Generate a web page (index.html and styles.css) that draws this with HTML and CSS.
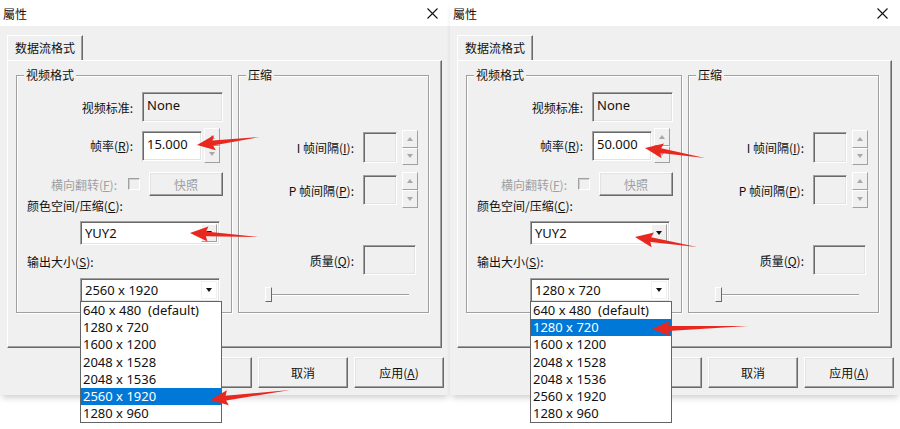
FILE: index.html
```html
<!DOCTYPE html>
<html lang="zh-CN">
<head>
    <meta charset="UTF-8">
    <meta name="viewport" content="width=device-width, initial-scale=1.0">
    <title>屬性</title>
    <link rel="stylesheet" href="styles.css">
</head>
<body>
<div class="screens">
    <div class="dialog">
        <div class="titlebar">
            <span class="title">屬性</span>
            <svg class="close" width="11" height="11" viewBox="0 0 11 11"><path d="M0.5 0.5 L10.5 10.5 M10.5 0.5 L0.5 10.5" stroke="#111" stroke-width="1.1" fill="none"/></svg>
        </div>
        <div class="body">
            <div class="tabs"><div class="tab">数据流格式</div></div>
            <div class="panel">
                <fieldset class="group video">
                    <legend>视频格式</legend>
                    <div class="row row-std">
                        <span class="lbl">视频标准:</span>
                        <div class="field readonly w-std">None</div>
                    </div>
                    <div class="row row-rate">
                        <span class="lbl">帧率(<u>R</u>):</span>
                        <div class="field w-rate">15.000</div>
                        <div class="spin"><span class="spin-btn"><i class="up"></i></span><span class="spin-btn"><i class="down"></i></span></div>
                    </div>
                    <div class="row row-flip">
                        <span class="lbl lbl-flip disabled">横向翻转(<u>F</u>):</span>
                        <span class="check"></span>
                        <span class="btn btn-snap disabled">快照</span>
                    </div>
                    <div class="caption cap-color">颜色空间/压缩(<u>C</u>):</div>
                    <div class="combo combo-color">
                        <span class="value">YUY2</span>
                        <span class="drop"><i class="down dark"></i></span>
                    </div>
                    <div class="caption cap-size">输出大小(<u>S</u>):</div>
                    <div class="combo combo-size">
                        <span class="value">2560 x 1920</span>
                        <span class="drop open"><i class="down dark"></i></span>
                        <ul class="list">
                            <li>640 x 480  (default)</li>
                            <li>1280 x 720</li>
                            <li>1600 x 1200</li>
                            <li>2048 x 1528</li>
                            <li>2048 x 1536</li>
                            <li class="selected">2560 x 1920</li>
                            <li>1280 x 960</li>
                        </ul>
                    </div>
                </fieldset>
                <fieldset class="group compress">
                    <legend>压缩</legend>
                    <div class="row row-i">
                        <span class="lbl">I 帧间隔(<u>I</u>):</span>
                        <div class="field readonly w-small"></div>
                        <div class="spin"><span class="spin-btn"><i class="up"></i></span><span class="spin-btn"><i class="down"></i></span></div>
                    </div>
                    <div class="row row-p">
                        <span class="lbl">P 帧间隔(<u>P</u>):</span>
                        <div class="field readonly w-small"></div>
                        <div class="spin"><span class="spin-btn"><i class="up"></i></span><span class="spin-btn"><i class="down"></i></span></div>
                    </div>
                    <div class="row row-q">
                        <span class="lbl lbl-q">质量(<u>Q</u>):</span>
                        <div class="field readonly w-quality"></div>
                    </div>
                    <div class="slider">
                        <span class="thumb"></span>
                        <span class="track"></span>
                    </div>
                </fieldset>
            </div>
            <div class="buttons">
                <span class="btn">确定</span>
                <span class="btn">取消</span>
                <span class="btn">应用(<u>A</u>)</span>
            </div>
        </div>
    </div>

    <div class="dialog">
        <div class="titlebar">
            <span class="title">屬性</span>
            <svg class="close" width="11" height="11" viewBox="0 0 11 11"><path d="M0.5 0.5 L10.5 10.5 M10.5 0.5 L0.5 10.5" stroke="#111" stroke-width="1.1" fill="none"/></svg>
        </div>
        <div class="body">
            <div class="tabs"><div class="tab">数据流格式</div></div>
            <div class="panel">
                <fieldset class="group video">
                    <legend>视频格式</legend>
                    <div class="row row-std">
                        <span class="lbl">视频标准:</span>
                        <div class="field readonly w-std">None</div>
                    </div>
                    <div class="row row-rate">
                        <span class="lbl">帧率(<u>R</u>):</span>
                        <div class="field w-rate">50.000</div>
                        <div class="spin"><span class="spin-btn"><i class="up"></i></span><span class="spin-btn"><i class="down"></i></span></div>
                    </div>
                    <div class="row row-flip">
                        <span class="lbl lbl-flip disabled">横向翻转(<u>F</u>):</span>
                        <span class="check"></span>
                        <span class="btn btn-snap disabled">快照</span>
                    </div>
                    <div class="caption cap-color">颜色空间/压缩(<u>C</u>):</div>
                    <div class="combo combo-color">
                        <span class="value">YUY2</span>
                        <span class="drop"><i class="down dark"></i></span>
                    </div>
                    <div class="caption cap-size">输出大小(<u>S</u>):</div>
                    <div class="combo combo-size">
                        <span class="value">1280 x 720</span>
                        <span class="drop open"><i class="down dark"></i></span>
                        <ul class="list">
                            <li>640 x 480  (default)</li>
                            <li class="selected">1280 x 720</li>
                            <li>1600 x 1200</li>
                            <li>2048 x 1528</li>
                            <li>2048 x 1536</li>
                            <li>2560 x 1920</li>
                            <li>1280 x 960</li>
                        </ul>
                    </div>
                </fieldset>
                <fieldset class="group compress">
                    <legend>压缩</legend>
                    <div class="row row-i">
                        <span class="lbl">I 帧间隔(<u>I</u>):</span>
                        <div class="field readonly w-small"></div>
                        <div class="spin"><span class="spin-btn"><i class="up"></i></span><span class="spin-btn"><i class="down"></i></span></div>
                    </div>
                    <div class="row row-p">
                        <span class="lbl">P 帧间隔(<u>P</u>):</span>
                        <div class="field readonly w-small"></div>
                        <div class="spin"><span class="spin-btn"><i class="up"></i></span><span class="spin-btn"><i class="down"></i></span></div>
                    </div>
                    <div class="row row-q">
                        <span class="lbl lbl-q">质量(<u>Q</u>):</span>
                        <div class="field readonly w-quality"></div>
                    </div>
                    <div class="slider">
                        <span class="thumb"></span>
                        <span class="track"></span>
                    </div>
                </fieldset>
            </div>
            <div class="buttons">
                <span class="btn">确定</span>
                <span class="btn">取消</span>
                <span class="btn">应用(<u>A</u>)</span>
            </div>
        </div>
    </div>

    <!-- red annotation arrows -->
    <svg class="marks" width="900" height="429" viewBox="0 0 900 429">
        <g fill="#e8271f">
            <polygon transform="translate(197 145) rotate(-7.2)" points="0,0 18,-7.5 16,-2.4 63.5,0 16,2.4 18,7.5"/>
            <polygon transform="translate(190 233) rotate(3.4)" points="0,0 18,-7.5 16,-2.4 68,0 16,2.4 18,7.5"/>
            <polygon transform="translate(210 400) rotate(-7.1)" points="0,0 18,-7.5 16,-2.4 80.6,0 16,2.4 18,7.5"/>
            <polygon transform="translate(645 148) rotate(9.5)" points="0,0 18,-7.5 16,-2.4 60.8,0 16,2.4 18,7.5"/>
            <polygon transform="translate(635 237) rotate(9.2)" points="0,0 18,-7.5 16,-2.4 62.8,0 16,2.4 18,7.5"/>
            <polygon transform="translate(652 329) rotate(-1.8)" points="0,0 18,-7.5 16,-2.4 96,0 16,2.4 18,7.5"/>
        </g>
    </svg>
</div>
</body>
</html>
```

FILE: styles.css
```css
* {
    box-sizing: border-box;
}
body {
    margin: 0;
    background-color: #fff;
    font-family: "Noto Sans CJK SC", "Noto Sans", sans-serif;
    font-size: 12px;
    color: #111;
}
.screens {
    position: relative;
    display: flex;
    width: 900px;
    height: 429px;
    overflow: hidden;
}
.dialog {
    width: 450px;
    height: 395px;
    background-color: #f0f0f0;
    box-shadow: 0 5px 6px -2px rgba(0, 0, 0, 0.18);
    display: flex;
    flex-direction: column;
}
.titlebar {
    height: 26px;
    background-color: #fff;
    display: flex;
    align-items: center;
    justify-content: space-between;
    padding: 0 12px 0 3px;
}
.title {
    font-size: 12px;
}
.body {
    flex: 1;
    padding: 9px 6px 0 7px;
}
.tabs {
    display: flex;
    height: 25px;
}
.tab {
    width: 76px;
    height: 25px;
    border-top: 1px solid #fff;
    border-left: 1px solid #fff;
    border-right: 1px solid #696969;
    box-shadow: inset -1px 0 0 #a0a0a0;
    text-align: center;
    line-height: 23px;
}

/* tab page */
.panel {
    height: 288px;
    margin-right: 2px;
    border: 1px solid;
    border-color: #fff #696969 #696969 #fff;
    box-shadow: inset -1px -1px 0 #a0a0a0;
    padding: 6px 0 0 8px;
    display: flex;
    gap: 6px;
    align-items: flex-start;
}
.group {
    margin: 0;
    padding: 0;
    min-width: 0;
    height: 246px;
    border: 1px solid #a0a0a0;
    box-shadow: inset 1px 1px 0 #fff, 1px 1px 0 #fff;
    display: flex;
    flex-direction: column;
}
.group legend {
    margin-left: 7px;
    padding: 0 2px;
    line-height: 16px;
    background-color: #f0f0f0;
}
.video {
    width: 216px;
}
.compress {
    width: 191px;
}
.row {
    display: flex;
    align-items: center;
}
.lbl {
    width: 116px;
    text-align: right;
    flex-shrink: 0;
}
.disabled {
    color: #a0a0a0;
}
.row-std {
    margin-top: 9px;
    height: 30px;
}
.row-rate {
    margin-top: 6px;
    height: 35px;
}
.row-flip {
    margin-top: 9px;
    height: 24px;
}
.lbl-flip {
    width: 100px;
}
.caption {
    height: 16px;
    line-height: 16px;
    padding-left: 10px;
}
.cap-color {
    margin-top: 2px;
}
.cap-size {
    margin-top: 9px;
}
.combo-color {
    margin-top: 7px;
}
.combo-size {
    margin-top: 8px;
}

/* sunken edit boxes */
.field {
    height: 30px;
    margin-left: 9px;
    border: 1px solid;
    border-color: #a0a0a0 #fff #fff #a0a0a0;
    box-shadow: inset 1px 1px 0 #696969, inset -1px -1px 0 #e3e3e3;
    background-color: #fff;
    font-family: "Noto Sans", sans-serif;
    font-size: 13px;
    line-height: 18px;
    padding: 3px 3px 0 4px;
}
.readonly {
    background-color: #f0f0f0;
}
.w-std {
    width: 81px;
}
.w-rate {
    width: 60px;
}
.w-small {
    width: 34px;
    height: 31px;
}
.w-quality {
    width: 53px;
}
.spin {
    width: 16px;
    height: 35px;
    margin-left: 2px;
    display: flex;
    flex-direction: column;
}
.spin-btn {
    flex: 1;
    border: 1px solid;
    border-color: #fff #a0a0a0 #a0a0a0 #fff;
    background-color: #f0f0f0;
    display: flex;
    align-items: center;
    justify-content: center;
}
.up {
    width: 0;
    height: 0;
    border-left: 3.5px solid transparent;
    border-right: 3.5px solid transparent;
    border-bottom: 4px solid #a8a8a8;
}
.down {
    width: 0;
    height: 0;
    border-left: 3.5px solid transparent;
    border-right: 3.5px solid transparent;
    border-top: 4px solid #a8a8a8;
}
.down.dark {
    border-top-color: #111;
}
.check {
    width: 12px;
    height: 12px;
    margin-left: 11px;
    border: 1px solid;
    border-color: #a0a0a0 #fff #fff #a0a0a0;
    box-shadow: inset 1px 1px 0 #d0d0d0;
    background-color: #f0f0f0;
}

/* raised buttons */
.btn {
    width: 90px;
    height: 31px;
    border: 1px solid;
    border-color: #fff #696969 #696969 #fff;
    box-shadow: inset -1px -1px 0 #a0a0a0, inset 1px 1px 0 #e3e3e3;
    background-color: #f0f0f0;
    display: flex;
    align-items: center;
    justify-content: center;
}
.btn-snap {
    width: 74px;
    height: 24px;
    margin-left: 9px;
}

/* combo boxes */
.combo {
    position: relative;
    width: 140px;
    height: 24px;
    margin-left: 63px;
    border: 1px solid;
    border-color: #a0a0a0 #fff #fff #a0a0a0;
    box-shadow: inset 1px 1px 0 #696969, inset -1px -1px 0 #e3e3e3;
    background-color: #fff;
    display: flex;
    align-items: center;
    padding: 2px;
}
.combo .value {
    flex: 1;
    padding-left: 2px;
    font-family: "Noto Sans", sans-serif;
    font-size: 13px;
}
.drop {
    width: 16px;
    height: 18px;
    border: 1px solid;
    border-color: #fff #a0a0a0 #a0a0a0 #fff;
    background-color: #f0f0f0;
    display: flex;
    align-items: center;
    justify-content: center;
}
.drop.open {
    border-color: #f0f0f0;
    background-color: #fff;
}
.list {
    position: absolute;
    top: 100%;
    left: -1px;
    z-index: 2;
    width: 142px;
    margin: 0;
    padding: 0;
    list-style: none;
    background-color: #fff;
    border: 1px solid #646464;
    font-family: "Noto Sans", sans-serif;
    font-size: 13px;
}
.list li {
    height: 17.2px;
    line-height: 17px;
    padding-left: 2px;
    white-space: pre;
}
.list li.selected {
    background-color: #0078d7;
    color: #fff;
}

/* compression group */
.compress .lbl {
    width: 115px;
}
.row-i {
    margin-top: 47px;
    height: 35px;
}
.row-p {
    margin-top: 7px;
    height: 36px;
}
.row-p .field {
    height: 30px;
}
.row-p .spin {
    height: 36px;
}
.compress .spin {
    margin-left: 5px;
}
.row-q {
    margin-top: 37px;
    height: 30px;
}
.slider {
    margin: 12px 0 0 26px;
    width: 144px;
    height: 15px;
    display: flex;
    align-items: center;
}
.thumb {
    width: 7px;
    height: 15px;
    border: 1px solid;
    border-color: #fff #696969 #696969 #fff;
    background-color: #f0f0f0;
}
.track {
    flex: 1;
    height: 2px;
    border-top: 1px solid #a0a0a0;
    border-bottom: 1px solid #fff;
}

.buttons {
    display: flex;
    justify-content: flex-end;
    gap: 6px;
    margin-top: 9px;
}

.marks {
    position: absolute;
    top: 0;
    left: 0;
    z-index: 5;
    pointer-events: none;
}
```
